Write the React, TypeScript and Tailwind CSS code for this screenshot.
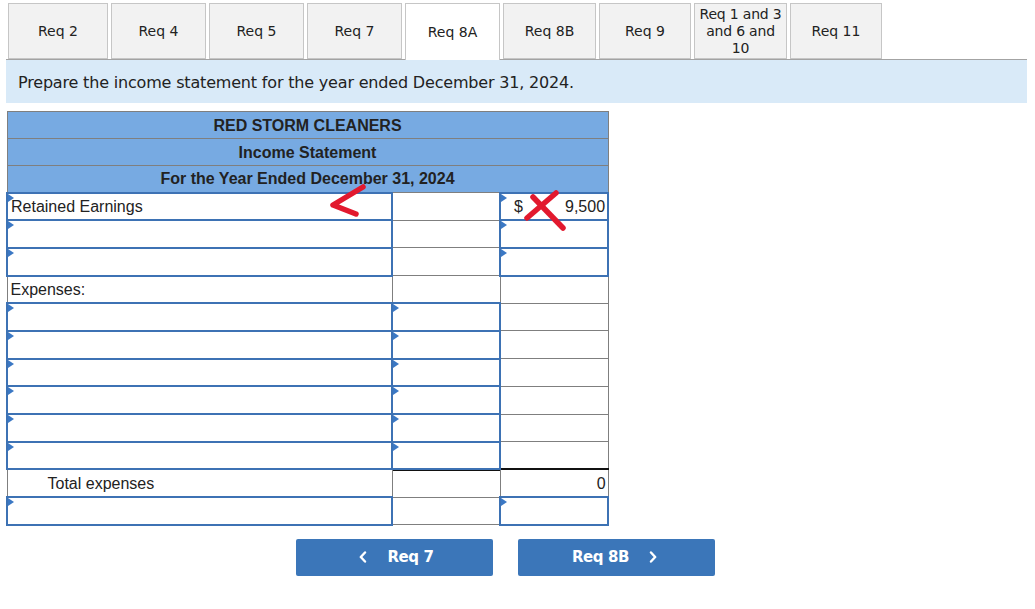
import React from 'react';

type Cell = 'input' | 'plain';

type Row = {
  label?: string;
  indent?: boolean;
  c1: Cell;
  c2: Cell;
  c3: Cell;
  value?: string;
  dollar?: boolean;
  totalLine?: boolean;
  netLine?: boolean;
};

const tabs = [
  { lines: ['Req 2'], w: 'w-[100px]' },
  { lines: ['Req 4'], w: 'w-[95px]' },
  { lines: ['Req 5'], w: 'w-[95px]' },
  { lines: ['Req 7'], w: 'w-[95px]' },
  { lines: ['Req 8A'], w: 'w-[95px]', active: true },
  { lines: ['Req 8B'], w: 'w-[93px]' },
  { lines: ['Req 9'], w: 'w-[92px]' },
  { lines: ['Req 1 and 3', 'and 6 and', '10'], w: 'w-[93px]' },
  { lines: ['Req 11'], w: 'w-[92px]' },
];

const rows: Row[] = [
  { label: 'Retained Earnings', c1: 'input', c2: 'plain', c3: 'input', value: '9,500', dollar: true },
  { c1: 'input', c2: 'plain', c3: 'input' },
  { c1: 'input', c2: 'plain', c3: 'input' },
  { label: 'Expenses:', c1: 'plain', c2: 'plain', c3: 'plain' },
  { c1: 'input', c2: 'input', c3: 'plain' },
  { c1: 'input', c2: 'input', c3: 'plain' },
  { c1: 'input', c2: 'input', c3: 'plain' },
  { c1: 'input', c2: 'input', c3: 'plain' },
  { c1: 'input', c2: 'input', c3: 'plain' },
  { c1: 'input', c2: 'input', c3: 'plain' },
  { label: 'Total expenses', indent: true, c1: 'plain', c2: 'plain', c3: 'plain', value: '0', totalLine: true },
  { c1: 'input', c2: 'plain', c3: 'input', netLine: true },
];

function Marker() {
  return (
    <span className="absolute left-0 top-0 w-0 h-0 border-y-[4px] border-y-transparent border-l-[6px] border-l-[#3b78c4]" />
  );
}

function cellClass(kind: Cell) {
  return kind === 'input'
    ? 'relative h-[27.7px] p-0 border-2 border-[#3d72b4]'
    : 'relative h-[27.7px] p-0 border border-[#7f7f7f]';
}

export default function App() {
  return (
    <div className="w-[1035px] h-[609px] bg-white overflow-hidden font-['DejaVu_Sans',Verdana,sans-serif] text-[#222]">
      {/* Tabs */}
      <div className="relative z-10 -mb-px flex items-start gap-[3px] pl-[8px] pt-[3px]">
        {tabs.map((t) => (
          <div
            key={t.lines.join(' ')}
            className={`${t.w} flex flex-col items-center justify-center pt-[1px] text-center text-[14px] leading-[17px] whitespace-nowrap border border-[#c6c6c6] ${
              t.active ? 'h-[57px] border-b-0 bg-white' : 'h-[56px] bg-[#f2f2f2]'
            } ${t.lines.length > 1 ? 'text-[13.5px] tracking-[-0.2px]' : ''}`}
          >
            {t.lines.map((l) => (
              <span key={l}>{l}</span>
            ))}
          </div>
        ))}
      </div>

      {/* Instruction band */}
      <div className="ml-[6px] w-[1021px] h-[44px] border-t border-[#a3a3a3] bg-[#d9eaf8] flex items-center pl-[12px] pt-[2px] text-[16px] tracking-[-0.18px]">
        Prepare the income statement for the year ended December 31, 2024.
      </div>

      {/* Statement */}
      <div className="relative ml-[6px] mt-[8px] w-[601px]">
        <table className="w-[601px] border-collapse table-fixed font-['Liberation_Sans',Arial,sans-serif] text-[16px] text-[#222]">
          <colgroup>
            <col className="w-[385px]" />
            <col className="w-[108px]" />
            <col className="w-[108px]" />
          </colgroup>
          <tbody>
            {['RED STORM CLEANERS', 'Income Statement', 'For the Year Ended December 31, 2024'].map((h) => (
              <tr key={h}>
                <td colSpan={3} className="h-[27px] p-0 pt-[1px] text-center font-bold bg-[#77aae2] border border-[#7f7f7f]">
                  {h}
                </td>
              </tr>
            ))}
            {rows.map((r, i) => (
              <tr key={i}>
                <td className={cellClass(r.c1)}>
                  {r.c1 === 'input' && <Marker />}
                  {r.label && (
                    <span className={`block leading-[20px] pt-[1px] ${r.indent ? 'pl-[40px]' : 'pl-[3px]'}`}>{r.label}</span>
                  )}
                </td>
                <td className={`${cellClass(r.c2)} ${r.totalLine ? 'shadow-[inset_0_1px_0_#111]' : ''}`}>
                  {r.c2 === 'input' && <Marker />}
                </td>
                <td
                  className={`${cellClass(r.c3)} ${r.totalLine ? 'border-t-2 border-t-[#111]' : ''} ${
                    r.netLine ? 'shadow-[0_-1px_0_#111,0_1px_0_#111]' : ''
                  }`}
                >
                  {r.c3 === 'input' && <Marker />}
                  {r.value && (
                    <span className="flex items-center justify-between pl-[13px] pr-[2px] pt-[1px] leading-[20px]">
                      <span>{r.dollar ? '$' : ''}</span>
                      <span>{r.value}</span>
                    </span>
                  )}
                </td>
              </tr>
            ))}
          </tbody>
        </table>

        {/* grading marks */}
        <svg
          className="absolute left-0 top-0 pointer-events-none"
          width="601"
          height="140"
          viewBox="0 0 601 140"
          fill="none"
          stroke="#e2192e"
          strokeWidth="5.5"
          strokeLinecap="round"
          strokeLinejoin="round"
        >
          <path d="M357 76 L327 94 L350 103" />
          <path d="M527 86 L557 117" />
          <path d="M521 107 L550 82" />
        </svg>
      </div>

      {/* Navigation */}
      <div className="mt-[13px] flex gap-[25px] pl-[296px]">
        <button className="w-[197px] h-[37px] rounded-[2px] bg-[#3b76b9] text-white font-bold text-[15px] tracking-[-0.4px] flex items-center justify-center gap-[20px] pl-[4px]">
          <svg width="8" height="12" viewBox="0 0 8 12" fill="none" stroke="white" strokeWidth="2.4" strokeLinecap="round" strokeLinejoin="round">
            <path d="M6 1.5 L1.8 6 L6 10.5" />
          </svg>
          <span>Req 7</span>
        </button>
        <button className="w-[197px] h-[37px] rounded-[2px] bg-[#3b76b9] text-white font-bold text-[15px] tracking-[-0.4px] flex items-center justify-center gap-[20px] pr-[4px]">
          <span>Req 8B</span>
          <svg width="8" height="12" viewBox="0 0 8 12" fill="none" stroke="white" strokeWidth="2.4" strokeLinecap="round" strokeLinejoin="round">
            <path d="M2 1.5 L6.2 6 L2 10.5" />
          </svg>
        </button>
      </div>
    </div>
  );
}
